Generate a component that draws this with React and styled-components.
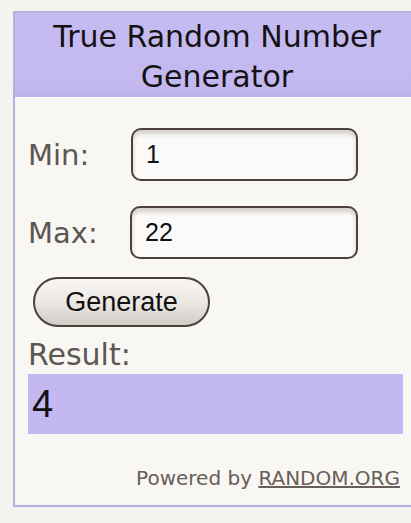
import React from 'react'
import styled, { createGlobalStyle } from 'styled-components'

const Global = createGlobalStyle`
  html, body {
    margin: 0;
    padding: 0;
    overflow: hidden;
    background: #f4f3ef;
  }
`

const App = () => {
  return (
    <>
      <Global />
      <Widget>
        <Header>True Random Number Generator</Header>
        <Body>
          <Row>
            <Label>Min:</Label>
            <Field>1</Field>
          </Row>
          <Row $gap={25}>
            <Label>Max:</Label>
            <Field $shift={-1}>22</Field>
          </Row>
          <Button>Generate</Button>
          <ResultLabel>Result:</ResultLabel>
          <ResultBox>4</ResultBox>
          <Powered>
            Powered by <a>RANDOM.ORG</a>
          </Powered>
        </Body>
      </Widget>
    </>
  )
}

export default App

const Widget = styled.div`
  margin: 11px 0 0 13px;
  width: 404px;
  border: 2px solid #b8addf;
  background: #f8f7f4;
`
const Header = styled.div`
  background: linear-gradient(#c5bbf1 0%, #c3b9f0 85%, #bdb2ea 100%);
  padding: 4px 20px 0 20px;
  height: 80px;
  text-align: center;
  font-family: "DejaVu Sans", Verdana, sans-serif;
  font-size: 30px;
  line-height: 40px;
  color: #141214;
`
const Body = styled.div`
  display: flex;
  flex-direction: column;
  padding: 31px 0 15px 13px;
`
const Row = styled.div`
  display: grid;
  grid-template-columns: 103px 227px;
  align-items: center;
  margin-top: ${p => (p.$gap ? p.$gap : 0)}px;
`
const Label = styled.div`
  font-family: "DejaVu Sans", Verdana, sans-serif;
  font-size: 29px;
  color: #5e5650;
`
const Field = styled.div`
  box-sizing: border-box;
  height: 53px;
  margin-left: ${p => p.$shift || 0}px;
  border: 2px solid #4b413a;
  border-radius: 10px;
  background: #fbfaf8;
  box-shadow: inset 0 4px 4px rgba(80, 60, 50, 0.22);
  padding-left: 13px;
  display: flex;
  align-items: center;
  font-family: "Liberation Sans", Arial, sans-serif;
  font-size: 25px;
  color: #111;
`
const Button = styled.div`
  box-sizing: border-box;
  margin: 18px 0 0 5px;
  width: 177px;
  height: 50px;
  border: 2px solid #4b413a;
  border-radius: 25px;
  background: linear-gradient(#f8f6f4 0%, #ece8e4 50%, #d3ccc6 100%);
  display: flex;
  align-items: center;
  justify-content: center;
  font-family: "Liberation Sans", Arial, sans-serif;
  font-size: 27px;
  color: #111;
`
const ResultLabel = styled.div`
  margin-top: 10px;
  font-family: "DejaVu Sans", Verdana, sans-serif;
  font-size: 30px;
  line-height: 36px;
  color: #5e5650;
`
const ResultBox = styled.div`
  margin-top: 1px;
  width: 375px;
  height: 60px;
  background: #c3b8f2;
  display: flex;
  align-items: center;
  padding-left: 4px;
  box-sizing: border-box;
  font-family: "Liberation Sans", Arial, sans-serif;
  font-size: 38px;
  color: #111;
`
const Powered = styled.div`
  margin-top: 32px;
  width: 372px;
  text-align: right;
  font-family: "DejaVu Sans", Verdana, sans-serif;
  font-size: 20px;
  line-height: 24px;
  color: #675e57;

  a {
    color: #675e57;
    text-decoration: underline;
  }
`
